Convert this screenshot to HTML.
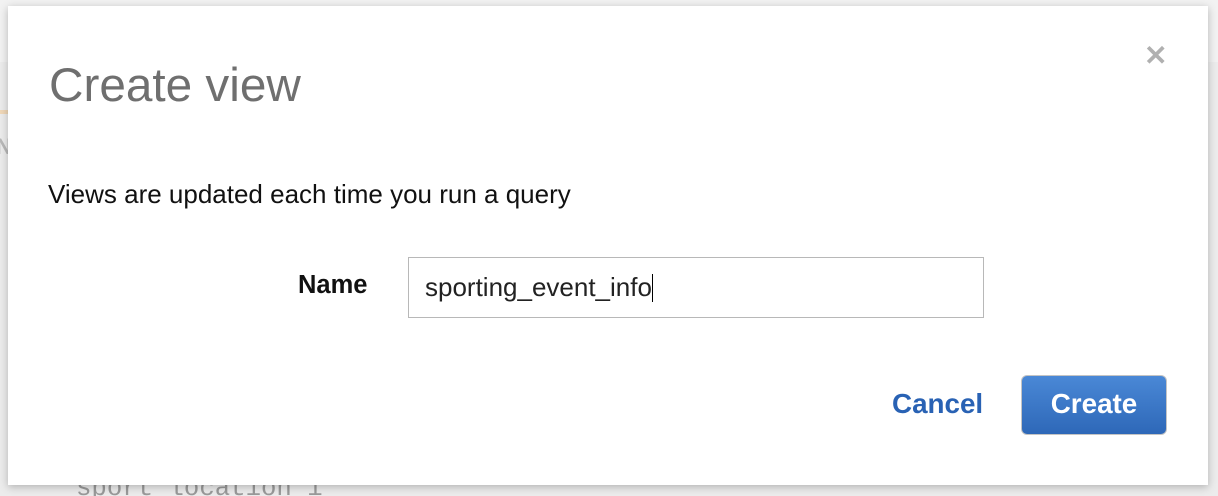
<!DOCTYPE html>
<html><head><style>
html,body{margin:0;padding:0;width:1218px;height:496px;overflow:hidden;background:#ececec;font-family:"Liberation Sans",Arial,sans-serif;position:relative}
.bg1{position:absolute;left:0;top:0;width:1218px;height:62px;background:#f2f2f2}
.orange{position:absolute;left:0;top:110px;width:10px;height:4px;background:#f0d8b8}
.n{position:absolute;left:-4px;top:134px;font-size:22px;color:#b9b9b9;font-weight:bold}
.mono{position:absolute;left:76px;top:474px;font-family:"Liberation Mono",monospace;font-size:25.7px;color:#9a9a9a}
.modal{position:absolute;left:8px;top:6px;width:1200px;height:479px;background:#fff;box-shadow:0 2px 8px rgba(0,0,0,.25)}
.title{position:absolute;left:41px;top:53px;font-size:47.7px;color:#6f6f6f;line-height:54px}
.close{position:absolute;left:1136px;top:36px;font-size:28px;color:#b0b0b0;font-weight:bold;line-height:28px}
.desc{position:absolute;left:40px;top:173px;font-size:26px;color:#111;line-height:30px}
.label{position:absolute;left:290px;top:264px;font-size:25.5px;font-weight:bold;color:#111;line-height:30px}
.input{position:absolute;left:400px;top:251px;width:576px;height:61px;border:1px solid #b8b8b8;box-sizing:border-box}
.input span{position:absolute;left:16px;top:14px;font-size:26px;color:#222;line-height:30px}
.input span:after{content:"";display:inline-block;width:1.5px;height:28px;background:#000;vertical-align:-6px}
.cancel{position:absolute;left:884px;top:383px;font-size:27.8px;font-weight:bold;color:#2962b4;line-height:30px}
.btn{position:absolute;left:1013px;top:369px;width:146px;height:60px;box-sizing:border-box;border:1.5px solid #c4c4c4;border-radius:6px;background:linear-gradient(#4a88d6,#2e68b8);color:#fff;font-size:27.8px;font-weight:bold;text-align:center;line-height:56px}
</style></head><body>
<div class="bg1"></div>
<div class="orange"></div>
<div class="n">N</div>
<div class="mono">sport location i</div>
<div class="modal">
<div class="title">Create view</div>
<div class="close">✕</div>
<div class="desc">Views are updated each time you run a query</div>
<div class="label">Name</div>
<div class="input"><span>sporting_event_info</span></div>
<div class="cancel">Cancel</div>
<div class="btn">Create</div>
</div>
</body></html>
